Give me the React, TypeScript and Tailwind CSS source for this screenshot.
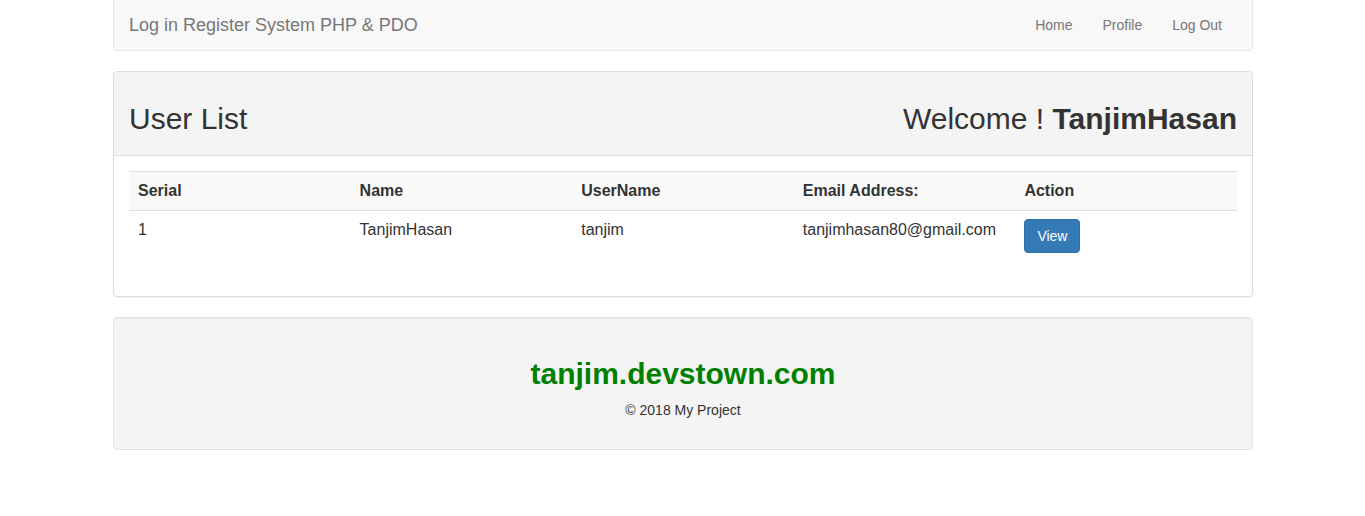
import React from 'react'

type User = {
  serial: number
  name: string
  username: string
  email: string
}

const users: User[] = [
  { serial: 1, name: 'TanjimHasan', username: 'tanjim', email: 'tanjimhasan80@gmail.com' },
]

const columns = ['Serial', 'Name', 'UserName', 'Email Address:', 'Action']

const navLinks = ['Home', 'Profile', 'Log Out']

export default function App() {
  return (
    <div className="min-h-[516px] bg-white text-[14px] leading-[20px] text-[#333] font-['Liberation_Sans',Arial,sans-serif]">
      <div className="ml-[98px] w-[1170px] px-[15px]">
        {/* navbar */}
        <nav className="flex h-[51px] items-center justify-between rounded-b-[4px] border-x border-b border-[#e7e7e7] bg-[#f8f8f8] px-[15px]">
          <a className="text-[18px] leading-[20px] text-[#777]">Log in Register System PHP &amp; PDO</a>
          <ul className="flex">
            {navLinks.map((link) => (
              <li key={link}>
                <a className="block px-[15px] py-[15px] text-[#777]">{link}</a>
              </li>
            ))}
          </ul>
        </nav>

        {/* user list panel */}
        <div className="mt-[20px] rounded-[4px] border border-[#ddd] bg-white shadow-[0_1px_1px_rgba(0,0,0,0.05)]">
          <div className="flex items-start justify-between rounded-t-[3px] border-b border-[#ddd] bg-[#f4f4f4] px-[15px] py-[10px]">
            <h2 className="mt-[20px] mb-[10px] text-[30px] leading-[33px] font-normal">User List</h2>
            <h2 className="mt-[20px] mb-[10px] text-[30px] leading-[33px] font-normal">
              Welcome ! <b className="font-bold">TanjimHasan</b>
            </h2>
          </div>
          <div className="p-[15px]">
            <table className="mb-[20px] w-full table-fixed border-collapse text-[16px] leading-[22px]">
              <thead>
                <tr className="bg-[#f9f9f9]">
                  {columns.map((col) => (
                    <th
                      key={col}
                      className="border-y border-[#ddd] py-[8px] pl-[9px] pr-[7px] text-left align-bottom font-bold"
                    >
                      {col}
                    </th>
                  ))}
                </tr>
              </thead>
              <tbody>
                {users.map((u) => (
                  <tr key={u.serial}>
                    <td className="py-[8px] pl-[9px] pr-[7px] align-top">{u.serial}</td>
                    <td className="py-[8px] pl-[9px] pr-[7px] align-top">{u.name}</td>
                    <td className="py-[8px] pl-[9px] pr-[7px] align-top">{u.username}</td>
                    <td className="py-[8px] pl-[9px] pr-[7px] align-top">{u.email}</td>
                    <td className="py-[8px] pl-[9px] pr-[7px] align-top">
                      <button className="h-[34px] rounded-[4px] border border-[#2e6da4] bg-[#337ab7] px-[12px] text-[14px] leading-[20px] text-white">
                        View
                      </button>
                    </td>
                  </tr>
                ))}
              </tbody>
            </table>
          </div>
        </div>

        {/* footer well */}
        <div className="mt-[20px] rounded-[4px] border border-[#e3e3e3] bg-[#f4f4f4] p-[19px] text-center shadow-[inset_0_1px_1px_rgba(0,0,0,0.05)]">
          <h2 className="mt-[20px] mb-[10px] text-[30px] leading-[33px] font-bold text-[#008000]">tanjim.devstown.com</h2>
          <p className="mb-[10px]">© 2018 My Project</p>
        </div>
      </div>
    </div>
  )
}
